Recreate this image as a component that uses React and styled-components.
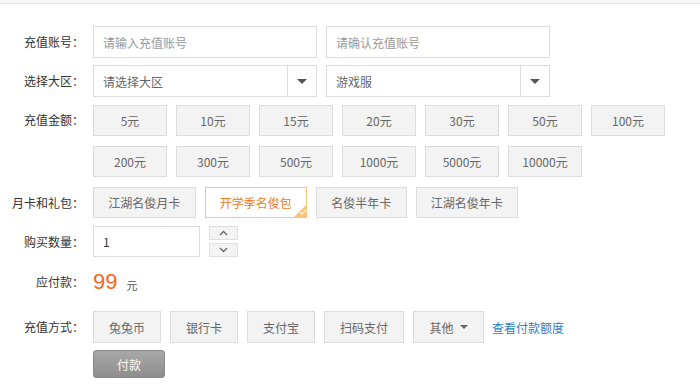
import React, { useState } from 'react'
import styled, { createGlobalStyle } from 'styled-components'

const GlobalStyle = createGlobalStyle`
  body {
    margin: 0;
    background: #fff;
    font-family: "Microsoft YaHei", "Noto Sans CJK SC", "Liberation Sans", sans-serif;
    font-size: 12px;
    color: #333;
  }
`

const TopBar = styled.div`
  height: 3px;
  background: #f6f6f6;
  border-bottom: 1px solid #e2e2e2;
`

const Form = styled.div`
  display: flex;
  flex-direction: column;
  padding-top: 22px;
`

const Row = styled.div`
  display: flex;
  align-items: ${(p) => (p.$top ? 'flex-start' : 'center')};
  margin-top: ${(p) => p.$mt || 0}px;
`

const Label = styled.div`
  width: 84px;
  flex-shrink: 0;
  margin-right: 9px;
  text-align: right;
  line-height: 30px;
  color: #333;
`

const Fields = styled.div`
  display: flex;
  flex-wrap: wrap;
  gap: ${(p) => p.$rowGap || 9}px 9px;
  width: ${(p) => p.$w || 'auto'};
  align-items: center;
`

const TextInput = styled.input`
  box-sizing: border-box;
  width: ${(p) => p.$w || 224}px;
  height: ${(p) => p.$h || 32}px;
  border: 1px solid #dcdcdc;
  padding: 0 9px;
  font: inherit;
  font-size: 12px;
  color: #333;
  outline: none;
  &::placeholder {
    color: #999;
  }
`

const Select = styled.div`
  box-sizing: border-box;
  width: 224px;
  height: 32px;
  border: 1px solid #dcdcdc;
  display: flex;
  align-items: stretch;
  color: #666;
`

const SelectText = styled.div`
  flex: 1;
  padding-left: 9px;
  display: flex;
  align-items: center;
`

const SelectArrow = styled.div`
  width: 28px;
  border-left: 1px solid #dcdcdc;
  display: flex;
  align-items: center;
  justify-content: center;
  &::after {
    content: '';
    border-left: 5px solid transparent;
    border-right: 5px solid transparent;
    border-top: 5px solid #555;
  }
`

const Option = styled.div`
  box-sizing: border-box;
  position: relative;
  height: ${(p) => p.$h || 31}px;
  width: ${(p) => (p.$w ? `${p.$w}px` : 'auto')};
  padding: 0 ${(p) => (p.$w ? 0 : p.$pad || 14.25)}px;
  display: flex;
  align-items: center;
  justify-content: center;
  gap: 6px;
  background: ${(p) => (p.$active ? '#fff' : '#f3f3f3')};
  border: 1px solid ${(p) => (p.$active ? '#f8c57a' : '#dcdcdc')};
  color: ${(p) => (p.$active ? '#f37b1d' : '#666')};
  font-size: 12px;
  cursor: pointer;
  white-space: nowrap;
`

const Corner = styled.span`
  position: absolute;
  right: -1px;
  bottom: -1px;
  width: 0;
  height: 0;
  border-left: 14px solid transparent;
  border-bottom: 14px solid #f8c57a;
  &::after {
    content: '';
    position: absolute;
    left: -7px;
    top: 6px;
    width: 5px;
    height: 2px;
    border-left: 1px solid #fff;
    border-bottom: 1px solid #fff;
    transform: rotate(-45deg);
  }
`

const Caret = styled.span`
  border-left: 4px solid transparent;
  border-right: 4px solid transparent;
  border-top: 4px solid #666;
`

const Spinner = styled.div`
  display: flex;
  flex-direction: column;
  gap: 3px;
  margin-left: 9px;
`

const SpinBtn = styled.div`
  box-sizing: border-box;
  width: 29px;
  height: ${(p) => p.$h}px;
  border: 1px solid #e0e0e0;
  background: #f3f3f3;
  display: flex;
  align-items: center;
  justify-content: center;
`

const Price = styled.span`
  font-family: "Liberation Sans", Arial, sans-serif;
  font-size: 22px;
  color: #f8661a;
  line-height: 30px;
`

const Unit = styled.span`
  margin-left: 9px;
  margin-top: 6px;
  font-size: 11px;
  color: #555;
`

const Link = styled.a`
  color: #2a7fc6;
  font-size: 12px;
  text-decoration: none;
  margin-left: -1px;
`

const PayButton = styled.button`
  box-sizing: border-box;
  width: 72px;
  height: 28px;
  border: 1px solid #8a8a8a;
  border-radius: 3px;
  background: linear-gradient(#a8a8a8, #8e8e8e);
  color: #fff;
  font: inherit;
  font-size: 12px;
`

const Chevron = ({ up }) => (
  <svg width="9" height="6" viewBox="0 0 9 6">
    <path d={up ? 'M1 5 L4.5 1.5 L8 5' : 'M1 1 L4.5 4.5 L8 1'} fill="none" stroke="#666" strokeWidth="1.3" />
  </svg>
)

const amounts = ['5元', '10元', '15元', '20元', '30元', '50元', '100元', '200元', '300元', '500元', '1000元', '5000元', '10000元']
const gifts = ['江湖名俊月卡', '开学季名俊包', '名俊半年卡', '江湖名俊年卡']
const methods = ['兔兔币', '银行卡', '支付宝', '扫码支付']

export default function App() {
  const [gift, setGift] = useState(1)
  return (
    <>
      <GlobalStyle />
      <TopBar />
      <Form>
        <Row>
          <Label>充值账号：</Label>
          <Fields>
            <TextInput placeholder="请输入充值账号" />
            <TextInput placeholder="请确认充值账号" />
          </Fields>
        </Row>
        <Row $mt={7}>
          <Label>选择大区：</Label>
          <Fields>
            <Select>
              <SelectText>请选择大区</SelectText>
              <SelectArrow />
            </Select>
            <Select>
              <SelectText>游戏服</SelectText>
              <SelectArrow />
            </Select>
          </Fields>
        </Row>
        <Row $mt={8} $top>
          <Label>充值金额：</Label>
          <Fields $w="590px" $rowGap={10}>
            {amounts.map((a) => (
              <Option key={a} $w={74}>{a}</Option>
            ))}
          </Fields>
        </Row>
        <Row $mt={10}>
          <Label>月卡和礼包：</Label>
          <Fields>
            {gifts.map((g, i) => (
              <Option key={g} $active={gift === i} onClick={() => setGift(i)}>
                {g}
                {gift === i && <Corner />}
              </Option>
            ))}
          </Fields>
        </Row>
        <Row $mt={8}>
          <Label>购买数量：</Label>
          <TextInput $w={107} $h={31} defaultValue="1" />
          <Spinner>
            <SpinBtn $h={14}>
              <Chevron up />
            </SpinBtn>
            <SpinBtn $h={14}>
              <Chevron />
            </SpinBtn>
          </Spinner>
        </Row>
        <Row $mt={10}>
          <Label>应付款：</Label>
          <Price>99</Price>
          <Unit>元</Unit>
        </Row>
        <Row $mt={14}>
          <Label>充值方式：</Label>
          <Fields>
            {methods.map((m) => (
              <Option key={m} $h={32} $pad={15}>{m}</Option>
            ))}
            <Option $h={32} $w={71}>
              其他 <Caret />
            </Option>
            <Link href="#">查看付款额度</Link>
          </Fields>
        </Row>
        <Row $mt={7}>
          <Label />
          <PayButton>付款</PayButton>
        </Row>
      </Form>
    </>
  )
}
